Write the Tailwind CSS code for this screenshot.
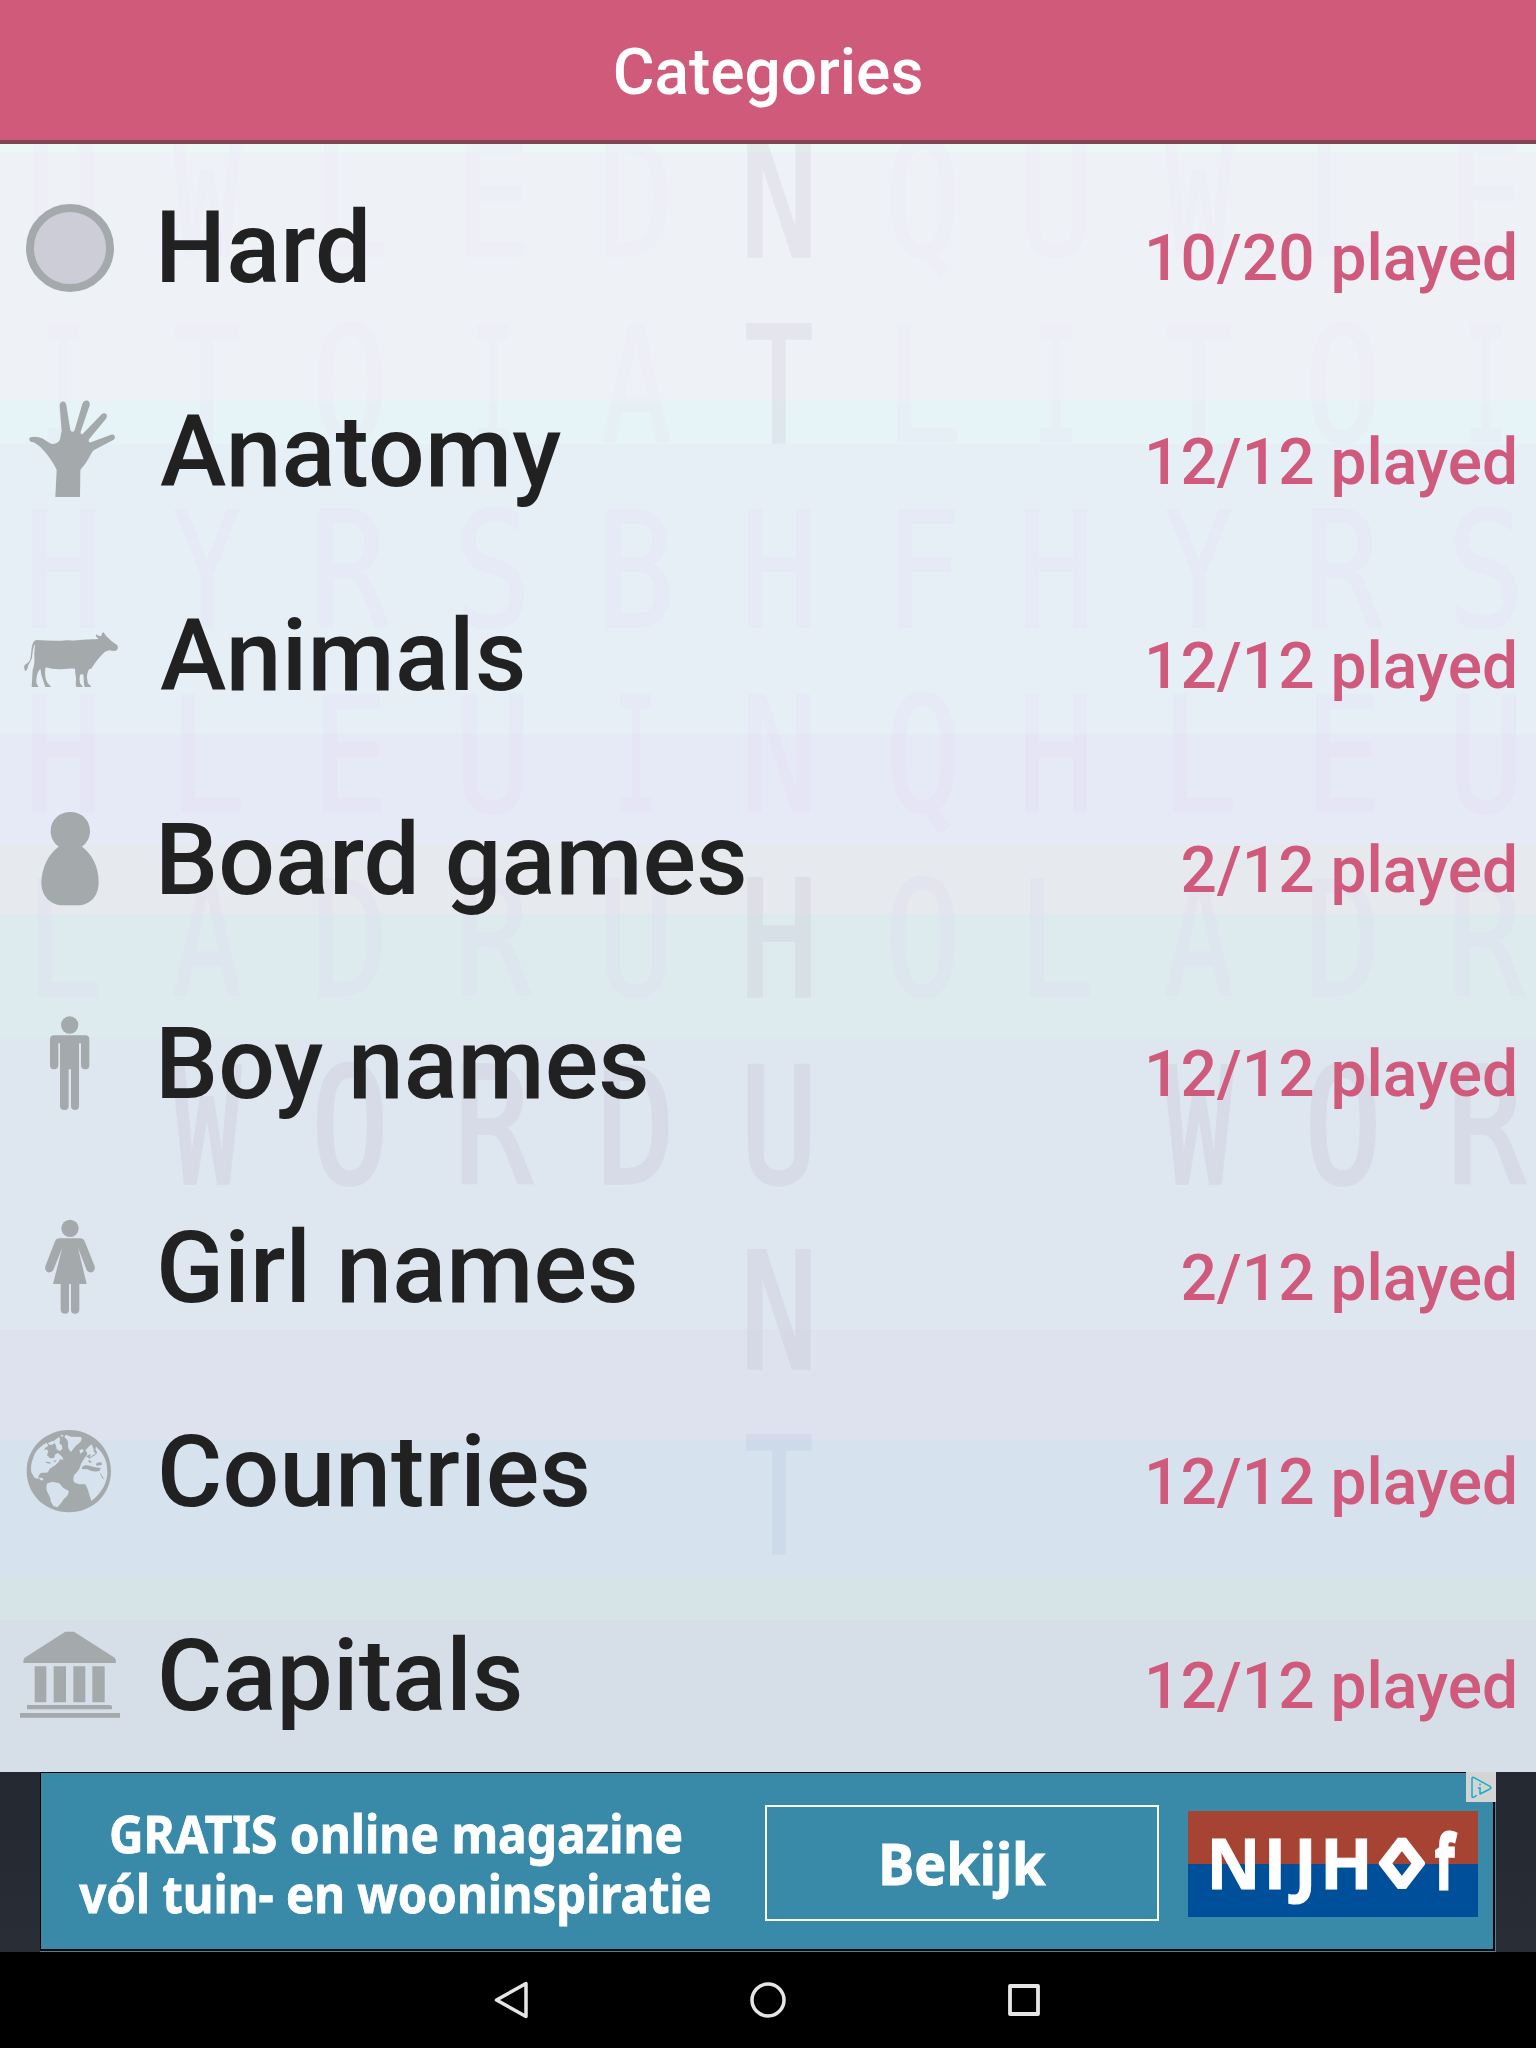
<!DOCTYPE html>
<html lang="en">
<head>
<meta charset="utf-8">
<title>Categories</title>
<script src="https://cdn.jsdelivr.net/npm/@tailwindcss/browser@4"></script>
</head>
<body class="w-[1536px] h-[2048px] overflow-hidden bg-black font-['Roboto',sans-serif]">
<div class="flex flex-col w-[1536px] h-[2048px]">
  <header class="h-[144px] shrink-0 bg-[#cf5a7a] border-b-4 border-[#804653] flex items-center justify-center pt-1.5">
    <h1 class="text-[64px] leading-[80px] font-medium text-white">Categories</h1>
  </header>

  <main class="relative h-[1628px] shrink-0 overflow-hidden">
    <!-- striped backdrop with the letter grid -->
    <div class="absolute inset-0 flex flex-col">
      <div class="h-[8px] bg-[#ecf7f6]"></div>
      <div class="h-[249px] bg-[#eef2f6]"></div>
      <div class="h-[43px] bg-[#e6f3f7]"></div>
      <div class="h-[290px] bg-[#e6eff6]"></div>
      <div class="h-[110px] bg-[#e6eaf6]"></div>
      <div class="h-[70px] bg-[#e6eaee]"></div>
      <div class="h-[124px] bg-[#deebee]"></div>
      <div class="h-[291px] bg-[#dee6ef]"></div>
      <div class="h-[111px] bg-[#dee2ee]"></div>
      <div class="h-[137px] bg-[#d6e2ee]"></div>
      <div class="h-[43px] bg-[#d6e4e8]"></div>
      <div class="h-[152px] bg-[#d6dee7]"></div>
    </div>
    <svg id="grid" class="absolute inset-0 font-['DejaVu_Sans_Mono',monospace]" width="1536" height="1628" viewBox="0 144 1536 1628" font-size="162" text-anchor="middle" stroke-linejoin="miter"></svg>

    <ul class="relative flex flex-col pt-0.5 text-[#a4aaac]">
      <li class="h-[204px] shrink-0 flex items-center">
        <svg class="w-[140px] h-[204px] shrink-0" viewBox="0 0 140 204"><circle cx="70" cy="102" r="40" fill="#cdcdd7" stroke="currentColor" stroke-width="8"/></svg>
        <span class="ml-[15px] grow text-[100px] leading-[204px] tracking-[0.2px] font-medium text-[#212121]">Hard</span>
        <span class="pt-[22px] pr-[18px] text-[64px] leading-[80px] font-medium text-[#d05a7b]">10/20 played</span>
      </li>
      <li class="h-[204px] shrink-0 flex items-center">
        <svg class="w-[140px] h-[204px] shrink-0" viewBox="0 -90 420 612" fill="currentColor"><path d="M166 351L170 270C160 246 140 221 122 202C112 192 103 186 92 185C86 182 86 174 92 172C104 168 118 171 126 175C138 182 148 191 158 192C170 191 178 186 180 178L185 152L179 78C178 60 198 60 199 76L211 150C214 157 221 157 224 150L247 72C252 56 272 59 269 76L242 155C241 162 245 165 250 160L302 106C312 93 327 103 318 116L267 178C264 186 268 189 275 186L333 164C344 161 349 173 341 179L281 211C270 222 268 240 241 270L240 351Z"/></svg>
        <span class="ml-5 grow text-[100px] leading-[204px] tracking-[0.2px] font-medium text-[#212121]">Anatomy</span>
        <span class="pt-[22px] pr-[18px] text-[64px] leading-[80px] font-medium text-[#d05a7b]">12/12 played</span>
      </li>
      <li class="h-[204px] shrink-0 flex items-center">
        <svg class="w-[140px] h-[204px] shrink-0" viewBox="0 -138 420 612" fill="currentColor"><path d="M110 120C140 122 170 124 200 121C230 123 265 117 285 118L296 116C288 112 286 107 289 103C294 108 299 109 305 107C304 101 307 98 311 97C314 101 314 104 318 107L334 123L350 134C356 139 354 145 350 151C343 155 335 152 329 151C321 152 315 155 309 161C299 170 285 187 275 205L266 209C262 220 259 228 262 240C263 250 265 253 271 256L273 261H254C250 250 252 238 250 224C246 222 243 222 240 226C238 233 239 243 240 250C243 255 246 256 249 261H229C225 249 231 240 226 222L225 206C212 205 200 206 190 207C172 210 152 206 137 202C134 214 135 226 138 240C143 252 148 254 154 261H136C131 246 128 236 124 224L121 206C113 214 110 226 109 239C108 249 111 254 116 261H95L98 210C103 197 104 183 103 168C102 155 106 142 104 132C99 145 97 160 96 173C91 186 87 190 84 198C84 205 80 210 77 214C72 208 71 202 74 195C80 191 86 188 90 180C94 169 93 148 97 135C99 126 103 121 110 120Z"/></svg>
        <span class="ml-5 grow text-[100px] leading-[204px] tracking-[0.3px] font-medium text-[#212121]">Animals</span>
        <span class="pt-[22px] pr-[18px] text-[64px] leading-[80px] font-medium text-[#d05a7b]">12/12 played</span>
      </li>
      <li class="h-[204px] shrink-0 flex items-center">
        <svg class="w-[140px] h-[204px] shrink-0" viewBox="0 474 420 612" fill="currentColor"><path d="M176 740C160 728 152 712 152 693C152 660 177 636 211 636C245 636 270 660 270 693C270 712 262 728 246 740C276 762 296 800 296 846C296 890 270 916 232 916H190C152 916 124 890 124 846C126 800 146 762 176 740Z"/></svg>
        <span class="ml-[15px] grow text-[100px] leading-[204px] tracking-[0.05px] font-medium text-[#212121]">Board games</span>
        <span class="pt-[22px] pr-[18px] text-[64px] leading-[80px] font-medium text-[#d05a7b]">2/12 played</span>
      </li>
      <li class="h-[204px] shrink-0 flex items-center">
        <svg class="w-[140px] h-[204px] shrink-0" viewBox="0 -114 420 612" fill="currentColor"><circle cx="209" cy="75" r="26"/><path d="M162 106H256Q268 106 268 118V195Q268 208 256 208Q243 208 243 195V130H237V318Q237 330 225 330Q213 330 213 318V208H206V318Q206 330 193 330Q180 330 180 318V130H175V195Q175 208 162 208Q150 208 150 195V118Q150 106 162 106Z"/></svg>
        <span class="ml-[15px] grow text-[100px] leading-[204px] font-medium text-[#212121]">Boy names</span>
        <span class="pt-[22px] pr-[18px] text-[64px] leading-[80px] font-medium text-[#d05a7b]">12/12 played</span>
      </li>
      <li class="h-[204px] shrink-0 flex items-center">
        <svg class="w-[140px] h-[204px] shrink-0" viewBox="0 498 420 612" fill="currentColor"><circle cx="210" cy="685" r="26"/><path d="M177 715H242Q250 715 254 724L284 799Q287 812 276 817Q265 819 260 810L234 743L260 852H238V929Q237 941 225 941Q213 941 213 929V852H207V929Q207 941 195 941Q183 941 182 929V852H159L187 743L160 810Q155 819 143 817Q133 812 136 799L165 724Q169 715 177 715Z"/></svg>
        <span class="ml-[16px] grow text-[100px] leading-[204px] tracking-[0.2px] font-medium text-[#212121]">Girl names</span>
        <span class="pt-[22px] pr-[18px] text-[64px] leading-[80px] font-medium text-[#d05a7b]">2/12 played</span>
      </li>
      <li class="h-[204px] shrink-0 flex items-center">
        <svg class="w-[140px] h-[204px] shrink-0" viewBox="0 -120 420 612" fill="currentColor"><path fill-rule="evenodd" d="M207 60C279 60 333 114 333 184C333 253 279 307 207 307C135 307 80 253 80 184C80 114 135 60 207 60ZM197 74L213 80L243 81C247 88 243 95 238 99L229 106L219 118L213 126C206 120 203 111 204 102C205 94 201 86 193 82ZM140 98C118 110 104 126 100 143C93 158 92 174 94 187L104 204L116 207C114 198 118 190 127 188C136 188 140 189 144 187L148 178C153 172 163 168 170 162L178 153L180 148L190 149L187 141L180 134L174 129L166 133L162 144L151 145L141 136L145 124L140 118L132 121L136 113L145 108ZM145 98L160 92L165 99L155 105L145 103ZM162 92L178 80L180 90L178 100L186 106L187 116L180 124L170 118L168 108ZM182 74L191 76L186 82ZM116 203L127 203L131 211H122ZM142 220L158 215L178 220L190 234L206 242C206 256 198 262 192 266L184 278L172 292L160 288L152 274C152 260 145 254 141 244C138 236 139 226 142 220ZM238 121L248 117L251 124L241 131ZM256 121L268 109L274 103C277 109 282 116 281 124L287 130L276 137L268 143L273 133L266 134L259 140L262 130ZM288 110C306 125 319 146 321 170L322 188C322 214 308 247 274 273L269 257L263 237L256 223L238 223C227 220 219 216 220 208L222 196L232 185L238 176L244 160L250 150L258 138L268 146L284 136L292 128L286 118Z"/><path d="M137 155L152 157L150 161L139 159ZM158 153L170 151L166 156ZM246 171L256 165L272 168L284 172L302 174L299 183C284 186 270 183 262 178L246 177ZM288 161Q296 155 306 158L305 165L289 167ZM264 152L270 150L275 158L268 158ZM299 187L303 191L313 209L306 203Z"/></svg>
        <span class="ml-[17px] grow text-[100px] leading-[204px] tracking-[0.2px] font-medium text-[#212121]">Countries</span>
        <span class="pt-[22px] pr-[18px] text-[64px] leading-[80px] font-medium text-[#d05a7b]">12/12 played</span>
      </li>
      <li class="h-[204px] shrink-0 flex items-center">
        <svg class="w-[140px] h-[204px] shrink-0" viewBox="0 492 420 612" fill="currentColor"><path d="M196 665H222L344 743Q348 747 348 759H70Q70 747 74 743ZM104 769H139V877H104ZM161 769H198V877H161ZM220 769H256V877H220ZM277 769H314V877H277ZM81 885H331L336 888V898H81ZM60 909H360V923H60Z"/></svg>
        <span class="ml-[17px] grow text-[100px] leading-[204px] tracking-[0.2px] font-medium text-[#212121]">Capitals</span>
        <span class="pt-[22px] pr-[18px] text-[64px] leading-[80px] font-medium text-[#d05a7b]">12/12 played</span>
      </li>
    </ul>
  </main>

  <section class="h-[180px] shrink-0 bg-linear-to-b from-[#242830] to-[#292d36] px-[40px]">
    <div class="relative h-[180px] w-[1456px] bg-[#3989a9]">
      <div class="h-[179px] w-[1455px] border-black border-l border-t border-r-2 border-b-2 flex items-start text-white">
        <div class="w-[710px] pt-[30px] flex flex-col items-center font-['Noto_Sans',sans-serif] font-bold text-[52px] leading-[60px] [-webkit-text-stroke:0.8px_white]">
          <span class="scale-x-[0.92] whitespace-nowrap">GRATIS online magazine</span>
          <span class="scale-x-[0.91] whitespace-nowrap">vól tuin- en wooninspiratie</span>
        </div>
        <div class="ml-[14px] mt-[32px] w-[394px] h-[116px] border-2 border-white flex items-center justify-center font-['Noto_Sans',sans-serif] font-bold text-[58px] leading-[76px] [-webkit-text-stroke:1px_white]">
          <span class="scale-x-[0.93]">Bekijk</span>
        </div>
        <svg class="ml-[29px] mt-[38px] w-[290px] h-[106px] font-['Open_Sans',sans-serif] font-bold" viewBox="1188 1811 290 106" font-size="69" fill="#fff" stroke="#fff">
          <rect x="1188" y="1811" width="290" height="53" fill="#a74333" stroke="none"/>
          <rect x="1188" y="1864" width="290" height="53" fill="#004f9b" stroke="none"/>
          <text transform="translate(1206.5 1888.5) scale(.96 1)" x="0" y="0">N</text>
          <text x="1263.5" y="1888.500">I</text>
          <text x="1294" y="1888.5">J</text>
          <text x="1320" y="1888.5">H</text>
          <text class="font-['DejaVu_Sans',sans-serif]" transform="translate(1402 1864) scale(1.65 1)" x="0" y="13.3" font-size="47" text-anchor="middle" stroke-width="5.5" stroke-linejoin="bevel">◊</text>
          <text transform="translate(1435 1888.5) scale(.72 1.1)" x="0" y="0" stroke-width="2.5">f</text>
        </svg>
      </div>
      <div class="absolute top-0 right-0 w-[30px] h-[30px] bg-[#d4d4d4]">
        <svg width="30" height="30" viewBox="0 0 90 90" fill="none" stroke="#12aeca" stroke-width="4.5" stroke-linejoin="round" stroke-linecap="round"><path d="M31 71L22 76Q18 77 18 72V20Q18 14 24 17L72 43Q77 47 72 51L42 66V48"/><path d="M37 48H42M42 37V38" /></svg>
      </div>
    </div>
  </section>

  <nav class="h-[96px] shrink-0 bg-black flex items-center justify-center gap-[206px]">
    <svg width="50" height="50" viewBox="0 0 50 50" fill="none" stroke="#e6e6e6" stroke-width="3.5" stroke-linejoin="round"><path d="M39 8.5V41.500L9.500 25Z"/></svg>
    <svg width="50" height="50" viewBox="0 0 50 50" fill="none" stroke="#e6e6e6" stroke-width="3.5"><circle cx="25" cy="25" r="16"/></svg>
    <svg width="50" height="50" viewBox="0 0 50 50" fill="none" stroke="#e6e6e6" stroke-width="3.8" stroke-linejoin="round"><rect x="11" y="11" width="28" height="28"/></svg>
  </nav>
</div>
<script>
  // Rows of the backdrop: letters, baseline, emphasised letters, strength and tint of the others
  const rows = [
    ['UWLEDNQUWLE', 257, [5], .07, '#eec0f6'], ['ITOIATLITOI', 443, [5], .07, '#eec0f6'],
    ['HYRSBHFHYRS', 628, [], .1, '#e6bef6'], ['HLEUINQHLEU', 813, [], .1, '#e6bef6'],
    ['LADRUHOLADR', 997, [5], .1, '#dcb8fa'], [' WORDU  WOR', 1184, [0,1,2,3,4,5,6,7,8,9,10], .1, ''],
    ['     N     ', 1369, [5], .1, ''], ['     T     ', 1554, [5], .1, '']
  ];
  const columns = [63.5, 207, 350, 493, 636, 779, 923, 1056, 1199, 1343, 1486];
  const widths = { I: .46, W: .7, T: .7, A: .72, Y: .7 };
  let out = '';
  for (const [letters, y, strong, alpha, tint] of rows) {
    [...letters].forEach((ch, i) => {
      if (ch === ' ') return;
      const bold = strong.includes(i);
      const paint = bold
        ? `fill="${y === 1554 ? '#8090c8' : '#967aa0'}" stroke="${y === 1554 ? '#8090c8' : '#967aa0'}" stroke-width="3.5" opacity=".09"`
        : `fill="${tint}" stroke="${tint}" stroke-width="1.5" opacity="${alpha}"`;
      out += `<text transform="translate(${columns[i]} ${y - 1}) scale(${widths[ch] || .8} .99)" ${paint}>${ch}</text>`;
    });
  }
  document.getElementById('grid').innerHTML = out;
</script>
</body>
</html>
